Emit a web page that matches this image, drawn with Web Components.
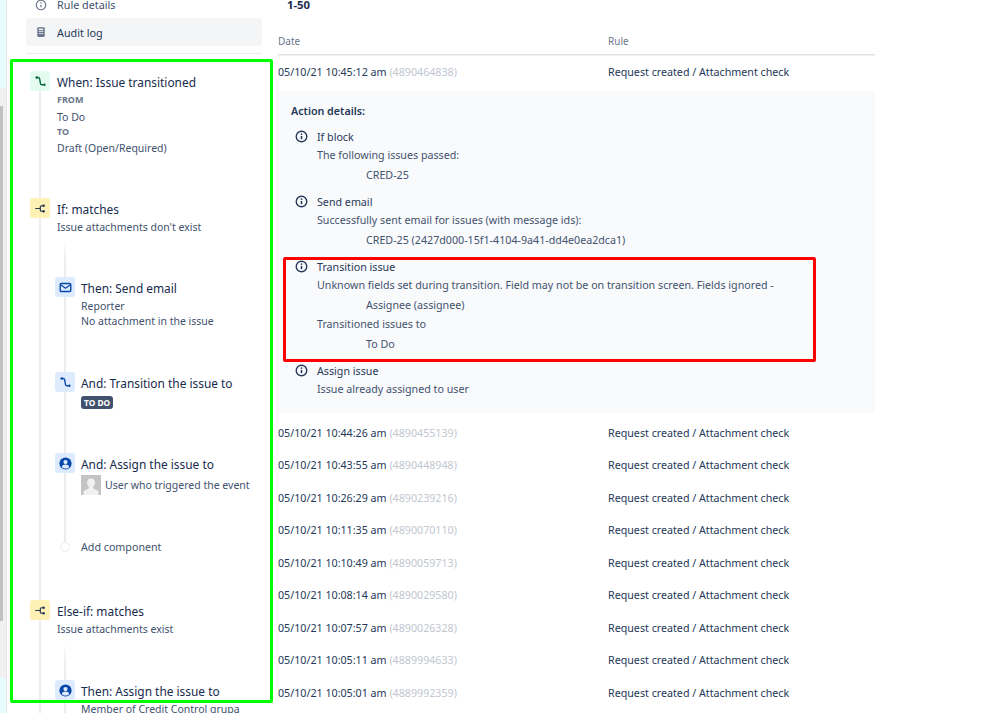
<!DOCTYPE html>
<html>
<head>
<meta charset="utf-8">
<style>
  html, body { margin: 0; padding: 0; background: #fff; height: 713px; overflow: hidden; }
  body { font-family: "Noto Sans", sans-serif; color: #172b4d; }
</style>
</head>
<body>
<audit-page></audit-page>

<script>
const ICONS = {
    transition: '<path d="M3.500 3h1.700c1 0 1.500.5 1.700 1.500l1.100 6c.2 1 .7 1.500 1.700 1.500h1.500" fill="none" stroke="currentColor" stroke-width="1.700"/><circle cx="3.300" cy="3" r="1.500" fill="currentColor"/><circle cx="12.700" cy="12" r="1.500" fill="currentColor"/>',
    branch: '<path d="M1.500 8h6M11 4.600H9.200c-.9 0-1.400.5-1.400 1.300v4.200c0 .8.5 1.300 1.400 1.300H11" fill="none" stroke="currentColor" stroke-width="1.500"/><circle cx="11.800" cy="4.600" r="1.600" fill="currentColor"/><circle cx="11.800" cy="11.400" r="1.600" fill="currentColor"/>',
    mail: '<rect x="1.500" y="3" width="13" height="10" rx="1.300" fill="none" stroke="currentColor" stroke-width="1.700"/><path d="M2.500 4.800L8 8.800l5.500-4" fill="none" stroke="currentColor" stroke-width="1.500"/>',
    user: '<circle cx="8" cy="8" r="7.500" fill="currentColor"/><circle cx="8" cy="6.200" r="2.600" fill="#deebff"/><path d="M3.400 12.300c.6-2.200 2.400-3.100 4.600-3.100s4 .9 4.600 3.100c-1.200 1.200-2.800 1.900-4.600 1.900s-3.400-.7-4.600-1.900z" fill="#deebff"/>'
};

class TileIcon extends HTMLElement {
    connectedCallback() {
        const kind = this.getAttribute('kind');
        this.attachShadow({ mode: 'open' });
        this.shadowRoot.innerHTML = `
            <style>
                :host { display: flex; align-items: center; justify-content: center; width: 20px; height: 20px; border-radius: 3px; position: relative; z-index: 1; }
                :host([tone="green"]) { background: #e3fcef; color: #006644; }
                :host([tone="yellow"]) { background: #fff0b3; color: #253858; }
                :host([tone="blue"]) { background: #deebff; color: #0747a6; }
                svg { width: 13px; height: 13px; display: block; }
            </style>
            <svg viewBox="0 0 16 16">${ICONS[kind]}</svg>`;
    }
}

class RuleStep extends HTMLElement {
    connectedCallback() {
        this.attachShadow({ mode: 'open' });
        const icon = this.getAttribute('kind');
        const tone = this.getAttribute('tone') || 'blue';
        this.shadowRoot.innerHTML = `
            <style>
                :host { display: grid; grid-template-columns: 20px 1fr; column-gap: var(--gap, 7px); height: var(--h, 80px); align-content: start; }
                .title { font-size: 11.900px; line-height: 22px; color: #172b4d; white-space: nowrap; }
                .body { grid-column: 2; font-size: 10.500px; line-height: 15px; color: #42526e; white-space: nowrap; }
            </style>
            <tile-icon kind="${icon}" tone="${tone}"></tile-icon>
            <div class="title">${this.getAttribute('title')}</div>
            <div class="body"><slot></slot></div>`;
    }
}

class RuleSidebar extends HTMLElement {
    connectedCallback() {
        this.attachShadow({ mode: 'open' });
        this.shadowRoot.innerHTML = `
            <style>
                :host { display: block; width: 267px; height: 713px; box-sizing: border-box; overflow: hidden; font-size: 10.500px; color: #42526e; position: relative; flex: none; }
                .edge { position: absolute; left: 0; top: 0; bottom: 0; width: 6px; display: flex; flex-direction: column; border-right: 1px solid #e4e4e6; }
                .edge i { display: block; }
                .nav { padding: 0 0 0 26px; width: 236px; }
                .nav-item { display: flex; align-items: center; gap: 10px; height: 28px; width: 236px; box-sizing: border-box; padding-left: 9px; font-size: 10.800px; color: #42526e; border-radius: 3px; }
                .nav-item.first { height: 10px; line-height: 10px; margin-bottom: 8px; }
                .nav-item.on { background: #f4f5f7; color: #253858; }
                .nav-item svg { width: 12px; height: 12px; flex: none; color: #6b778c; }
                hr { border: 0; height: 1px; background: #ebecf0; margin: 7px 0 0 26px; width: 236px; }
                .tree { position: absolute; left: 30px; top: 71px; width: 230px; }
                .rail { position: absolute; width: 2px; background: #ebecf0; }
                .rail.fade { background: linear-gradient(180deg, transparent, #ebecf0 24px); }
                .sub { margin-left: 25px; --gap: 6px; }
                .add { display: flex; align-items: center; gap: 11px; margin-left: 30px; height: 20px; font-size: 10.700px; color: #42526e; position: relative; }
                .dot { width: 10px; height: 10px; box-sizing: border-box; border: 1px solid #ebecf0; border-radius: 50%; background: #fff; margin-top: -1px; }
                .label { font-size: 9px; font-weight: 700; line-height: 15px; color: #6b778c; }
                .lozenge { display: inline-block; font-size: 8.400px; font-weight: 700; line-height: 13px; padding: 0 3px; margin-top: 2px; background: #42526e; color: #fff; border-radius: 3px; }
                .avatar { display: flex; align-items: center; gap: 4px; }
                .avatar svg { width: 20px; height: 20px; flex: none; }
            </style>
            <div class="edge">
                <i style="height:88px;background:#e6fcff"></i>
                <i style="height:18px;background:#f0f0f0"></i>
                <i style="height:515px;background:linear-gradient(90deg,#c1c1c1 0 3px,#f0f0f0 3px)"></i>
                <i style="height:57px;background:#f0f0f0"></i>
                <i style="flex:1;background:#e6fcff"></i>
            </div>
            <div class="nav">
                <div class="nav-item first"><svg viewBox="0 0 16 16"><circle cx="8" cy="8" r="6.300" fill="none" stroke="currentColor" stroke-width="1.600"/><circle cx="8" cy="5" r="1" fill="currentColor"/><path d="M8 7.500v3.500" stroke="currentColor" stroke-width="1.700"/></svg>Rule details</div>
                <div class="nav-item on"><svg viewBox="0 0 16 16"><rect x="3" y="1.500" width="10" height="13" rx="1.500" fill="currentColor"/><rect x="5" y="3.500" width="6" height="2" fill="#f4f5f7"/><rect x="5" y="7" width="6" height="1" fill="#f4f5f7"/><rect x="5" y="9.500" width="6" height="1" fill="#f4f5f7"/></svg>Audit log</div>
            </div>
            <hr>
            <div class="tree">
                <div class="rail" style="left:9px;top:0;height:642px"></div>
                <div class="rail fade" style="left:34px;top:167px;height:305px"></div>
                <div class="rail fade" style="left:34px;top:572px;height:70px"></div>
                <rule-step kind="transition" tone="green" title="When: Issue transitioned" style="--h:127px">
                    <div class="label" style="margin-top:-1px">FROM</div>
                    <div style="margin-top:3px">To Do</div>
                    <div class="label" style="margin-top:-1px">TO</div>
                    <div style="margin-top:2px">Draft (Open/Required)</div>
                </rule-step>
                <rule-step kind="branch" tone="yellow" title="If: matches" style="--h:79px">Issue attachments don't exist</rule-step>
                <div class="sub">
                    <rule-step kind="mail" title="Then: Send email" style="--h:95px">Reporter<br>No attachment in the issue</rule-step>
                    <rule-step kind="transition" title="And: Transition the issue to" style="--h:81px"><span class="lozenge">TO DO</span></rule-step>
                    <rule-step kind="user" title="And: Assign the issue to" style="--h:84px">
                        <div class="avatar"><svg viewBox="0 0 20 20"><rect width="20" height="20" fill="#c4c4c4"/><path d="M10 3.500c2.500 0 4 1.800 4 4.200 0 2-1 3.500-2 4.300l.3 1.500 5.200 2.500V20h-15v-4l5.200-2.500.3-1.500c-1-.8-2-2.300-2-4.300 0-2.400 1.500-4.200 4-4.200z" fill="#f1f1f1"/></svg>User who triggered the event</div>
                    </rule-step>
                </div>
                <div class="add"><span class="dot"></span>Add component</div>
                <div style="height:43px"></div>
                <rule-step kind="branch" tone="yellow" title="Else-if: matches" style="--h:80px">Issue attachments exist</rule-step>
                <div class="sub">
                    <rule-step kind="user" title="Then: Assign the issue to" style="--h:40px">Member of Credit Control grupa</rule-step>
                </div>
            </div>`;
    }
}

class ActionDetail extends HTMLElement {
    connectedCallback() {
        this.attachShadow({ mode: 'open' });
        this.shadowRoot.innerHTML = `
            <style>
                :host { display: grid; grid-template-columns: 14px 1fr; column-gap: 8px; margin-left: 4px; font-size: 10.700px; line-height: 18px; color: #42526e; margin-top: var(--mt, 0); }
                svg { width: 13px; height: 13px; color: #253858; margin-top: 2px; }
                .t { color: #253858; }
                .b { grid-column: 2; white-space: nowrap; }
            </style>
            <svg viewBox="0 0 16 16"><circle cx="8" cy="8" r="6.500" fill="none" stroke="currentColor" stroke-width="1.700"/><circle cx="8" cy="5" r="1.100" fill="currentColor"/><path d="M8 7.300v4" stroke="currentColor" stroke-width="1.900"/></svg>
            <div class="t">${this.getAttribute('title')}</div>
            <div class="b"><slot></slot></div>`;
    }
}

class LogRow extends HTMLElement {
    connectedCallback() {
        this.attachShadow({ mode: 'open' });
        this.shadowRoot.innerHTML = `
            <style>
                :host { display: grid; grid-template-columns: 330px 1fr; align-items: center; height: var(--h, 32.500px); box-sizing: border-box; padding-bottom: var(--pb, 0); font-size: 10.700px; color: #253858; white-space: nowrap; }
                .id { color: #c1c7d0; }
            </style>
            <div>${this.getAttribute('date')} <span class="id">(${this.getAttribute('ref')})</span></div>
            <div>Request created / Attachment check</div>`;
    }
}

class AuditLog extends HTMLElement {
    connectedCallback() {
        this.attachShadow({ mode: 'open' });
        const rows = [
            ['05/10/21 10:44:26 am', '4890455139'],
            ['05/10/21 10:43:55 am', '4890448948'],
            ['05/10/21 10:26:29 am', '4890239216'],
            ['05/10/21 10:11:35 am', '4890070110'],
            ['05/10/21 10:10:49 am', '4890059713'],
            ['05/10/21 10:08:14 am', '4890029580'],
            ['05/10/21 10:07:57 am', '4890026328'],
            ['05/10/21 10:05:11 am', '4889994633'],
            ['05/10/21 10:05:01 am', '4889992359']
        ];
        this.shadowRoot.innerHTML = `
            <style>
                :host { display: block; width: 597px; flex: none; margin-left: 11px; font-size: 10.700px; color: #42526e; }
                .range { font-size: 11.300px; font-weight: 700; color: #172b4d; line-height: 9px; margin-left: 9px; }
                .head { display: grid; grid-template-columns: 330px 1fr; height: 22px; margin-top: 24px; box-sizing: border-box; align-items: center; border-bottom: 1px solid #dfe1e6; box-shadow: 0 1px 0 #f0f0f4; font-size: 10px; color: #6b778c; padding-bottom: 5px; }
                .panel { background: #f9fafc; height: 322px; box-sizing: border-box; padding: 11px 13px 0 13px; }
                .ttl { font-size: 10.700px; font-weight: 600; color: #253858; line-height: 18px; margin-bottom: 8px; }
                .in { margin-left: 49px; margin-top: 2px; margin-bottom: 1px; }
                .rows { margin-top: 3.700px; }
            </style>
            <div class="range">1-50</div>
            <div class="head"><div>Date</div><div>Rule</div></div>
            <log-row date="05/10/21 10:45:12 am" ref="4890464838" style="--h:36px;--pb:2px"></log-row>
            <div class="panel">
                <div class="ttl">Action details:</div>
                <action-detail title="If block">The following issues passed:<div class="in">CRED-25</div></action-detail>
                <action-detail title="Send email" style="--mt:8px">Successfully sent email for issues (with message ids):<div class="in">CRED-25 (2427d000-15f1-4104-9a41-dd4e0ea2dca1)</div></action-detail>
                <action-detail title="Transition issue" style="--mt:8px">Unknown fields set during transition. Field may not be on transition screen. Fields ignored -<div class="in">Assignee (assignee)</div>Transitioned issues to<div class="in">To Do</div></action-detail>
                <action-detail title="Assign issue" style="--mt:8px">Issue already assigned to user</action-detail>
            </div>
            <div class="rows">${rows.map(r => `<log-row date="${r[0]}" ref="${r[1]}"></log-row>`).join('')}</div>`;
    }
}

class MarkBox extends HTMLElement {
    connectedCallback() {
        this.attachShadow({ mode: 'open' });
        this.shadowRoot.innerHTML = `
            <style>
                :host { display: block; position: absolute; box-sizing: border-box; border: 3px solid var(--c); border-radius: 2px; pointer-events: none; }
            </style>`;
    }
}

class AuditPage extends HTMLElement {
    connectedCallback() {
        this.attachShadow({ mode: 'open' });
        this.shadowRoot.innerHTML = `
            <style>
                :host { display: flex; width: 999px; height: 713px; overflow: hidden; position: relative; background: #fff; }
            </style>
            <rule-sidebar></rule-sidebar>
            <audit-log></audit-log>
            <mark-box style="--c:#00ff00;left:10px;top:59px;width:263px;height:644px"></mark-box>
            <mark-box style="--c:#ff0000;left:283px;top:257px;width:533px;height:105px"></mark-box>`;
    }
}

customElements.define('tile-icon', TileIcon);
customElements.define('rule-step', RuleStep);
customElements.define('rule-sidebar', RuleSidebar);
customElements.define('action-detail', ActionDetail);
customElements.define('log-row', LogRow);
customElements.define('audit-log', AuditLog);
customElements.define('mark-box', MarkBox);
customElements.define('audit-page', AuditPage);
</script>
</body>
</html>
